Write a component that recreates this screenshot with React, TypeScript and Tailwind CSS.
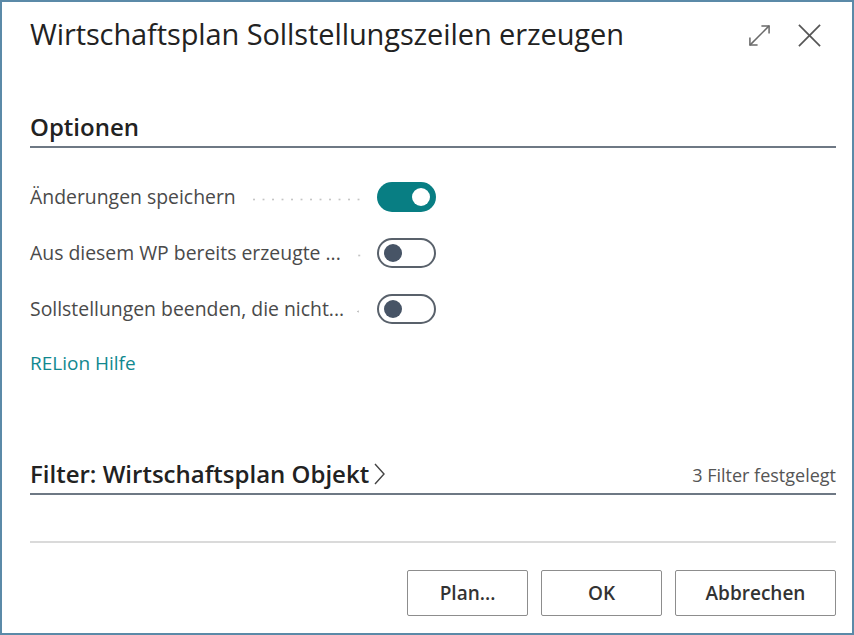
import React from "react";

function Toggle({ on }: { on: boolean }) {
  if (on) {
    return (
      <div className="w-[59px] h-[30px] rounded-full bg-[#087e83] flex items-center justify-end pr-[6px] shrink-0">
        <div className="w-[18px] h-[18px] rounded-full bg-white" />
      </div>
    );
  }
  return (
    <div className="w-[59px] h-[30px] rounded-full border-2 border-[#59616b] flex items-center pl-[5px] shrink-0">
      <div className="w-[18px] h-[18px] rounded-full bg-[#475466]" />
    </div>
  );
}

function Row({ label, on }: { label: string; on: boolean }) {
  return (
    <div className="flex items-center h-[56px]">
      <div className="w-[347px] flex items-center min-w-0">
        <span className="text-[19.4px] text-[#4a4a4a] whitespace-nowrap leading-[26px]">{label}</span>
        <span className="flex-1 ml-[12px] mr-[14px] h-[3px] translate-y-[2px] bg-[radial-gradient(circle,#c4c4c4_0.9px,transparent_1.2px)] bg-[length:9.5px_3px] bg-right bg-repeat-x" />
      </div>
      <Toggle on={on} />
    </div>
  );
}

export default function App() {
  return (
    <div
      className="w-[854px] h-[635px] bg-white border-2 border-[#5b8aa8] flex flex-col"
      style={{ fontFamily: '"Open Sans", "Noto Sans", sans-serif' }}
    >
      <div className="flex items-start justify-between pl-[28px] pr-[30px] pt-[15px] h-[66px]">
        <h1 className="text-[29px] leading-[34px] font-medium text-[#222] tracking-[-0.1px]">
          Wirtschaftsplan Sollstellungszeilen erzeugen
        </h1>
        <div className="flex items-center gap-[26px] pt-[6px]">
          <svg width="23" height="23" viewBox="0 0 24 24" fill="none" stroke="#6a6a6a" strokeWidth="1.6">
            <path d="M2 22 L22 2" />
            <path d="M14 2 H22 V10" />
            <path d="M2 14 V22 H10" />
          </svg>
          <svg width="25" height="25" viewBox="0 0 26 26" fill="none" stroke="#555" strokeWidth="1.8">
            <path d="M2 2 L24 24" />
            <path d="M24 2 L2 24" />
          </svg>
        </div>
      </div>

      <div className="pl-[28px] pr-[16px] mt-[44px]">
        <div className="border-b-2 border-[#6e7884] pb-[4px]">
          <h2 className="text-[24px] leading-[30px] font-semibold text-[#222]">Optionen</h2>
        </div>
        <div className="mt-[21px] flex flex-col">
          <Row label="Änderungen speichern" on={true} />
          <Row label="Aus diesem WP bereits erzeugte ..." on={false} />
          <Row label="Sollstellungen beenden, die nicht..." on={false} />
        </div>
        <div className="mt-[13px] text-[19px] leading-[26px] text-[#11888f]">RELion Hilfe</div>
      </div>

      <div className="pl-[28px] pr-[16px] mt-[82px]">
        <div className="border-b-2 border-[#6e7884] flex items-end justify-between pb-[3px]">
          <div className="flex items-center text-[24px] leading-[32px] font-semibold text-[#222]">
            Filter: Wirtschaftsplan Objekt
            <svg width="14" height="24" viewBox="0 0 14 24" fill="none" stroke="#444" strokeWidth="1.4" className="ml-[3px]">
              <path d="M3 2 L12 12 L3 22" />
            </svg>
          </div>
          <div className="text-[18px] leading-[26px] text-[#555] pb-[2px]">3 Filter festgelegt</div>
        </div>
      </div>

      <div className="ml-[28px] mr-[16px] mt-[46px] border-b-2 border-[#dadada]" />

      <div className="flex justify-end gap-[13px] pr-[16px] mt-[27px]">
        <button className="w-[121px] h-[46px] border border-[#8d8d8d] rounded-[2px] text-[19px] font-semibold text-[#333]">Plan...</button>
        <button className="w-[121px] h-[46px] border border-[#8d8d8d] rounded-[2px] text-[19px] font-semibold text-[#333]">OK</button>
        <button className="w-[161px] h-[46px] border border-[#8d8d8d] rounded-[2px] text-[19px] font-semibold text-[#333]">Abbrechen</button>
      </div>
    </div>
  );
}
